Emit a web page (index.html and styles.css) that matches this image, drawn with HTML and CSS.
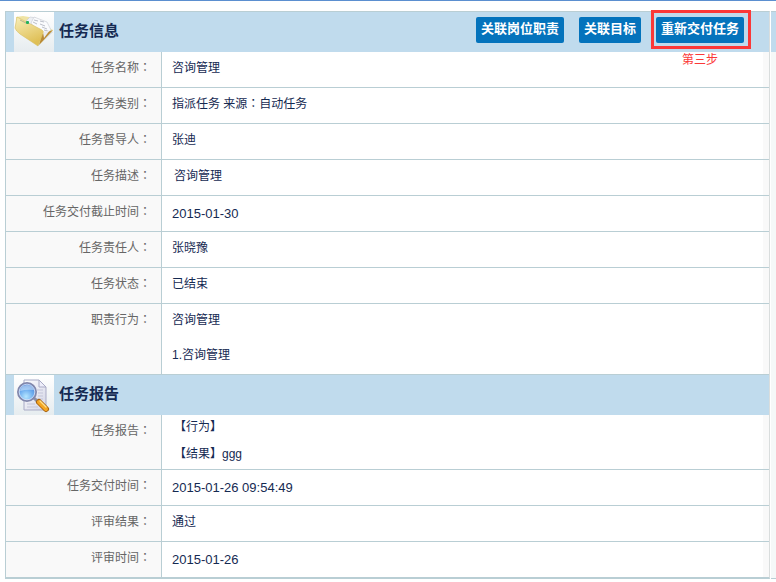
FILE: index.html
```
<!DOCTYPE html>
<html lang="zh-CN">
<head>
  <meta charset="UTF-8">
  <meta name="viewport" content="width=device-width, initial-scale=1.0">
  <title>任务信息</title>
  <link rel="stylesheet" href="styles.css">
</head>
<body>

  <div class="page">
    <main class="panel">

      <!-- 任务信息 -->
      <header class="panel-head">
        <svg class="head-icon" viewBox="0 0 40 40" aria-hidden="true">
          <defs>
            <linearGradient id="tile" x1="0" y1="0" x2="0" y2="1">
              <stop offset="0" stop-color="#ffffff"/>
              <stop offset="1" stop-color="#e6ecef"/>
            </linearGradient>
            <linearGradient id="folder" x1="0" y1="0" x2="0.4" y2="1">
              <stop offset="0" stop-color="#f8efbb"/>
              <stop offset="1" stop-color="#dfbf55"/>
            </linearGradient>
          </defs>
          <rect width="40" height="40" fill="url(#tile)"/>
          <path d="M24 34 L39 20 L36 18 L22 29z" fill="#c3cacd" opacity="0.6"/>
          <path d="M2 5 L9 4 L15 5 L39 18 L26 32 L4 16z" fill="#efe3a4"/>
          <path d="M12 9 L16 5 L22 6 L28 16 L26 26z" fill="#eef0f4" stroke="#c6cad2" stroke-width="0.6"/>
          <path d="M17 11 L20 5 L33 10 L37 18 L28 26z" fill="#fafbfd" stroke="#c6cad2" stroke-width="0.6"/>
          <path d="M20 8 L24 9 M19 10 L23 12 M26 9 L30 10 M26 12 L31 14 M28 15 L33 17 M30 18 L34 19" stroke="#a9afbb" stroke-width="0.8"/>
          <path d="M28 22 L39 18 L25 33z" fill="#b98a35"/>
          <path d="M29 20 L36 18 L30 26z" fill="#e9ebef"/>
          <path d="M3 5 L28 18 Q30 19 29 21 L24 34 L6 22 Q2 19 1 16z" fill="url(#folder)" stroke="#d7bd5e" stroke-width="0.6"/>
          <path d="M6 8 L12 11" stroke="#b9b48e" stroke-width="1"/>
          <rect x="12" y="9" width="3" height="3" rx="1" fill="#22b05a"/>
        </svg>
        <h2 class="head-title">任务信息</h2>
        <div class="head-actions">
          <button type="button" class="btn">关联岗位职责</button>
          <button type="button" class="btn">关联目标</button>
          <div class="step">
            <button type="button" class="btn">重新交付任务</button>
            <span class="step-frame"></span>
            <span class="step-note">第三步</span>
          </div>
        </div>
      </header>

      <table class="info">
        <tr><th scope="row">任务名称<span class="colon" lang="zh-TW">：</span></th><td>咨询管理</td></tr>
        <tr><th scope="row">任务类别<span class="colon" lang="zh-TW">：</span></th><td>指派任务 来源<span class="colon" lang="zh-TW">：</span>自动任务</td></tr>
        <tr><th scope="row">任务督导人<span class="colon" lang="zh-TW">：</span></th><td>张迪</td></tr>
        <tr><th scope="row">任务描述<span class="colon" lang="zh-TW">：</span></th><td class="rich">咨询管理</td></tr>
        <tr><th scope="row">任务交付截止时间<span class="colon" lang="zh-TW">：</span></th><td class="date">2015-01-30</td></tr>
        <tr><th scope="row">任务责任人<span class="colon" lang="zh-TW">：</span></th><td>张晓豫</td></tr>
        <tr><th scope="row">任务状态<span class="colon" lang="zh-TW">：</span></th><td>已结束</td></tr>
        <tr>
          <th scope="row">职责行为<span class="colon" lang="zh-TW">：</span></th>
          <td>
            <p class="duty">咨询管理</p>
            <p class="duty">1.咨询管理</p>
          </td>
        </tr>
      </table>

      <!-- 任务报告 -->
      <header class="panel-head">
        <svg class="head-icon" viewBox="0 0 40 40" aria-hidden="true">
          <defs>
            <radialGradient id="lens" cx="0.45" cy="0.75" r="0.8">
              <stop offset="0" stop-color="#b5e6ff"/>
              <stop offset="0.5" stop-color="#6cacef"/>
              <stop offset="1" stop-color="#3c74cf"/>
            </radialGradient>
            <linearGradient id="sheet" x1="0" y1="0" x2="1" y2="1">
              <stop offset="0" stop-color="#fdfdff"/>
              <stop offset="1" stop-color="#d3d5e6"/>
            </linearGradient>
          </defs>
          <rect width="40" height="40" fill="url(#tile)"/>
          <path d="M10 5 H25 L32 12 V35 H10z" fill="url(#sheet)" stroke="#a9abc6" stroke-width="1"/>
          <path d="M25 5 V12 H32z" fill="#eeeefa" stroke="#a9abc6" stroke-width="1"/>
          <path d="M23 15 H29 M24 18 H29 M24 21 H29 M22 24 H29 M13 29 H21 M13 32 H24" stroke="#c3c5d9" stroke-width="1"/>
          <path d="M20 23 L24 27" stroke="#8d91a5" stroke-width="3"/>
          <path d="M25 27 L32 34" stroke="#a86412" stroke-width="6" stroke-linecap="round"/>
          <path d="M25 27 L32 34" stroke="#f5a623" stroke-width="4" stroke-linecap="round"/>
          <path d="M26 26 L32 32" stroke="#ffe08a" stroke-width="1.4" stroke-linecap="round"/>
          <circle cx="13" cy="17" r="9" fill="url(#lens)" stroke="#8187ac" stroke-width="2"/>
          <circle cx="13" cy="17" r="7.8" fill="none" stroke="#dce6fa" stroke-width="0.8"/>
          <path d="M6 16 Q7 10 13 10 Q19 10 20 15 Q13 14 6 16z" fill="#ffffff" opacity="0.4"/>
        </svg>
        <h2 class="head-title">任务报告</h2>
      </header>

      <table class="info">
        <tr>
          <th scope="row">任务报告<span class="colon" lang="zh-TW">：</span></th>
          <td class="rich report">
            <p>【行为】</p>
            <p>【结果】ggg</p>
          </td>
        </tr>
        <tr><th scope="row">任务交付时间<span class="colon" lang="zh-TW">：</span></th><td class="date">2015-01-26 09:54:49</td></tr>
        <tr><th scope="row">评审结果<span class="colon" lang="zh-TW">：</span></th><td>通过</td></tr>
        <tr><th scope="row">评审时间<span class="colon" lang="zh-TW">：</span></th><td class="date">2015-01-26</td></tr>
      </table>
    </main>

    <aside class="side">
      <div class="side-head"></div>
    </aside>
  </div>

</body>
</html>
```
FILE: styles.css
```
* {
  box-sizing: border-box;
}

body {
  margin: 0;
  border-top: 1px solid #5b8fd0;
  background-color: #ffffff;
  color: #152a52;
  font-family: "Liberation Sans", "Noto Sans CJK SC", sans-serif;
  font-size: 12px;
  line-height: 18px;
}

p,
h2 {
  margin: 0;
}

.page {
  display: flex;
  gap: 1px;
  padding: 10px 0 3px 5px;
}

.panel {
  flex: 1;
  border: 1px solid #b9ced4;
  border-right-color: #d9dddd;
  border-bottom-width: 2px;
}

/* 标题栏 */
.panel-head {
  display: flex;
  align-items: center;
  height: 40px;
  padding: 0 25px 0 8px;
  background-color: #c0dbed;
}

.head-icon {
  width: 40px;
  height: 40px;
}

.head-title {
  margin-left: 5px;
  padding-bottom: 2px;
  font-size: 15px;
  line-height: 20px;
}

.head-actions {
  display: flex;
  gap: 15px;
  margin-left: auto;
  padding-bottom: 4px;
}

.btn {
  display: block;
  height: 26px;
  padding: 0 5px 2px;
  border: none;
  border-radius: 2px;
  background-color: #0473bc;
  color: #ffffff;
  font-family: inherit;
  font-size: 13px;
  font-weight: bold;
  line-height: 24px;
  white-space: nowrap;
  cursor: pointer;
}

.btn:hover {
  background-color: #0582d4;
}

/* 第三步标注 */
.step {
  position: relative;
}

.step-frame {
  position: absolute;
  top: -7px;
  right: -7px;
  bottom: -6px;
  left: -5px;
  border: 3px solid #fb3838;
  pointer-events: none;
}

.step-note {
  position: absolute;
  top: 34px;
  left: 0;
  width: 100%;
  color: #fb3838;
  text-align: center;
}

/* 信息表格 */
.info {
  width: 100%;
  border-collapse: separate;
  border-spacing: 0;
}

.info th,
.info td {
  height: 36px;
  padding: 7px 10px 10px;
  border-bottom: 1px solid #b9ced4;
  vertical-align: top;
}

.info th {
  width: 156px;
  border-right: 1px solid #b9ced4;
  background-color: #f9f9f9;
  color: #666666;
  font-weight: normal;
  text-align: right;
}

.info td {
  box-shadow: inset -6px 0 #f9f9f9;
  text-align: left;
}

.info:last-child tr:last-child th,
.info:last-child tr:last-child td {
  height: 35px;
  border-bottom: none;
}

.info .date {
  padding-top: 9px;
  padding-bottom: 8px;
  font-size: 13px;
}

.colon {
  font-family: "Noto Sans CJK TC", sans-serif;
  line-height: 1;
}

.duty + .duty {
  margin-top: 17px;
}

.info .rich {
  padding-left: 12px;
}

.info .report {
  padding-top: 3px;
  padding-bottom: 6px;
}

.report p + p {
  margin-top: 9px;
}

/* 右侧栏 */
.side {
  width: 5px;
  border-top: 1px solid #b9ced4;
  border-bottom: 1px solid #b9ced4;
  background-color: #f5f8f8;
}

.side-head {
  height: 40px;
  background-color: #c0dbed;
}
```
